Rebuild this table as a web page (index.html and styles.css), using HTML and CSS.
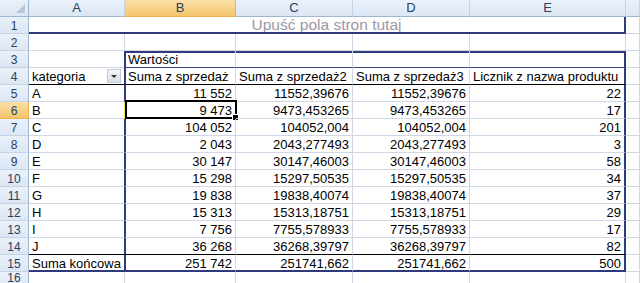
FILE: index.html
```html
<!DOCTYPE html>
<html lang="pl">
  <head>
    <meta charset="UTF-8" />
    <meta name="viewport" content="width=device-width, initial-scale=1.0" />
    <title>Tabela przestawna</title>
    <link rel="stylesheet" href="styles.css">
  </head>
  <body>
    <div class="sheet">
      <!-- column headers -->
      <div class="hd corner"></div>
      <div class="hd col">A</div>
      <div class="hd col sel">B</div>
      <div class="hd col">C</div>
      <div class="hd col">D</div>
      <div class="hd col">E</div>
      <div class="hd col"></div>

      <!-- 1: page field drop zone -->
      <div class="hd row">1</div>
      <div class="c dropzone">Upuść pola stron tutaj</div>
      <div class="c"></div>

      <!-- 2 -->
      <div class="hd row">2</div>
      <div class="c"></div>
      <div class="c"></div>
      <div class="c"></div>
      <div class="c"></div>
      <div class="c"></div>
      <div class="c"></div>

      <!-- 3 -->
      <div class="hd row">3</div>
      <div class="c"></div>
      <div class="c pv-top pv-left pv-sub">Wartości</div>
      <div class="c pv-top pv-sub"></div>
      <div class="c pv-top pv-sub"></div>
      <div class="c pv-top pv-right pv-sub"></div>
      <div class="c"></div>

      <!-- 4 -->
      <div class="hd row">4</div>
      <div class="c pv-head">kategoria<span class="dd"></span></div>
      <div class="c pv-head pv-left">Suma z sprzedaż</div>
      <div class="c pv-head">Suma z sprzedaż2</div>
      <div class="c pv-head">Suma z sprzedaż3</div>
      <div class="c pv-head pv-right">Licznik z nazwa produktu</div>
      <div class="c"></div>
    </div>

    <script>
      // rows 5..15 of the pivot body
      var data = [
        ["A", "11 552", "11552,39676", "11552,39676", "22"],
        ["B", "9 473", "9473,453265", "9473,453265", "17"],
        ["C", "104 052", "104052,004", "104052,004", "201"],
        ["D", "2 043", "2043,277493", "2043,277493", "3"],
        ["E", "30 147", "30147,46003", "30147,46003", "58"],
        ["F", "15 298", "15297,50535", "15297,50535", "34"],
        ["G", "19 838", "19838,40074", "19838,40074", "37"],
        ["H", "15 313", "15313,18751", "15313,18751", "29"],
        ["I", "7 756", "7755,578933", "7755,578933", "17"],
        ["J", "36 268", "36268,39797", "36268,39797", "82"],
        ["Suma końcowa", "251 742", "251741,662", "251741,662", "500"]
      ];

      var sheet = document.querySelector(".sheet");

      function cell(cls, text) {
        var d = document.createElement("div");
        d.className = cls;
        if (text) d.textContent = text;
        sheet.appendChild(d);
        return d;
      }

      data.forEach(function (r, i) {
        var n = i + 5;
        var last = i === data.length - 1;
        var extra = "";
        if (i === data.length - 2) extra = " pv-pretotal";
        if (last) extra = " pv-total";

        cell("hd row" + (n === 6 ? " sel" : ""), String(n));
        cell("c" + extra, r[0]);
        var b = cell("c num pv-left" + extra, r[1]);
        if (n === 6) b.classList.add("active");
        cell("c num" + extra, r[2]);
        cell("c num" + extra, r[3]);
        cell("c num pv-right" + extra, r[4]);
        cell("c");
      });

      cell("hd row last", "16");
      for (var k = 0; k < 6; k++) cell("c");
    </script>
  </body>
</html>
```

FILE: styles.css
```css
:root {
  --grid: #d0d7e5;
  --head-line: #9eb6ce;
  --pivot: #2e3a7c;
}

body {
  margin: 0;
  background: #fff;
  font-family: "Liberation Sans", Arial, sans-serif;
  overflow: hidden;
}

.sheet {
  display: grid;
  grid-template-columns: 29px 96px 111px 117px 117px 156px 14px;
  grid-auto-rows: 17px;
  width: 640px;
  height: 283px;
  overflow: hidden;
}

/* Headers */
.hd {
  box-sizing: border-box;
  background: linear-gradient(#eaf1fa, #dce6f4);
  border-right: 1px solid var(--head-line);
  border-bottom: 1px solid var(--head-line);
  color: #27415f;
  font-size: 12px;
  line-height: 16px;
  text-align: center;
}

.hd.col {
  font-size: 13px;
  border-right-color: #c5d3e5;
}

.hd.row {
  border-bottom-color: #c5d3e5;
  font-size: 12px;
  line-height: 18px;
}

.hd.row.last {
  line-height: 13px;
}

.hd.sel {
  background: linear-gradient(#fbe0a8, #f4c46c);
  border-right-color: #f2b04f;
  border-bottom-color: #f2b04f;
}

.corner {
  position: relative;
}

.corner::after {
  content: "";
  position: absolute;
  right: 3px;
  bottom: 3px;
  border-style: solid;
  border-width: 0 0 9px 9px;
  border-color: transparent transparent #b8c8dc transparent;
}

/* Cells */
.c {
  position: relative;
  box-sizing: border-box;
  border-right: 1px solid var(--grid);
  border-bottom: 1px solid var(--grid);
  padding: 0 3px;
  font-size: 13px;
  line-height: 18px;
  color: #000;
  white-space: nowrap;
  overflow: hidden;
}

.c.num {
  text-align: right;
}

.dropzone {
  grid-column: span 5;
  text-align: center;
  font-size: 15.5px;
  line-height: 16px;
  color: #9d96a8;
  border-right: 2px solid var(--pivot);
  border-bottom: 2px solid var(--pivot);
}

/* Pivot table outline */
.pv-top {
  box-shadow: inset 0 2px 0 var(--pivot);
}

.pv-left {
  border-left: 2px solid var(--pivot);
  margin-left: -1px;
  padding-left: 2px;
}

.pv-right {
  border-right: 2px solid var(--pivot);
}

.pv-sub {
  border-bottom-color: #3b4680;
}

.pv-head {
  border-bottom-color: #000;
}

.pv-pretotal {
  border-bottom-color: #000;
}

.pv-total {
  border-bottom: 2px solid var(--pivot);
}

/* Filter button next to the row field */
.dd {
  position: absolute;
  right: 3px;
  top: 1px;
  width: 14px;
  height: 14px;
  box-sizing: border-box;
  border: 1px solid #c3cedc;
  background: linear-gradient(#f4f6f9, #d9e0ea);
}

.dd::after {
  content: "";
  position: absolute;
  left: 3px;
  top: 5px;
  border-style: solid;
  border-width: 3px 3px 0 3px;
  border-color: #333 transparent transparent transparent;
}

/* Active cell */
.active {
  border-left-color: #e8e84a;
  overflow: visible;
}

.active::before {
  content: "";
  position: absolute;
  left: -1px;
  top: -2px;
  right: -2px;
  bottom: -1px;
  border: 2px solid #000;
}

.active::after {
  content: "";
  position: absolute;
  right: -4px;
  bottom: -3px;
  width: 5px;
  height: 5px;
  background: #000;
  border: 1px solid #fff;
}
```
